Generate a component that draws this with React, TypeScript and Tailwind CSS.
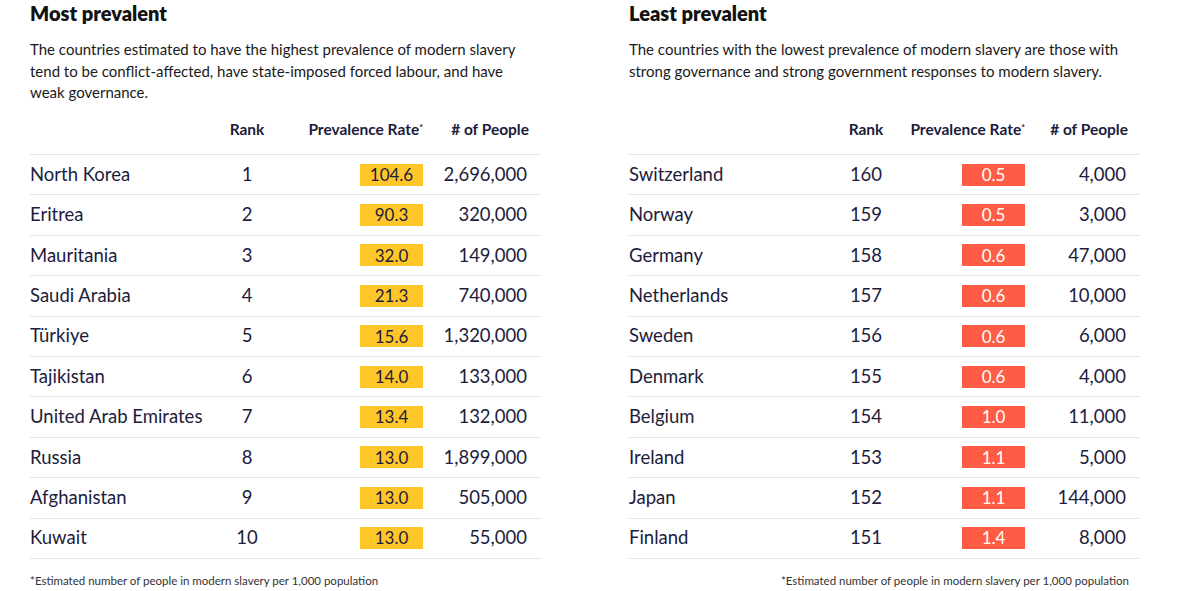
import React from "react";

type Row = { country: string; rank: number; rate: string; people: string };

const most: Row[] = [
  { country: "North Korea", rank: 1, rate: "104.6", people: "2,696,000" },
  { country: "Eritrea", rank: 2, rate: "90.3", people: "320,000" },
  { country: "Mauritania", rank: 3, rate: "32.0", people: "149,000" },
  { country: "Saudi Arabia", rank: 4, rate: "21.3", people: "740,000" },
  { country: "Türkiye", rank: 5, rate: "15.6", people: "1,320,000" },
  { country: "Tajikistan", rank: 6, rate: "14.0", people: "133,000" },
  { country: "United Arab Emirates", rank: 7, rate: "13.4", people: "132,000" },
  { country: "Russia", rank: 8, rate: "13.0", people: "1,899,000" },
  { country: "Afghanistan", rank: 9, rate: "13.0", people: "505,000" },
  { country: "Kuwait", rank: 10, rate: "13.0", people: "55,000" },
];

const least: Row[] = [
  { country: "Switzerland", rank: 160, rate: "0.5", people: "4,000" },
  { country: "Norway", rank: 159, rate: "0.5", people: "3,000" },
  { country: "Germany", rank: 158, rate: "0.6", people: "47,000" },
  { country: "Netherlands", rank: 157, rate: "0.6", people: "10,000" },
  { country: "Sweden", rank: 156, rate: "0.6", people: "6,000" },
  { country: "Denmark", rank: 155, rate: "0.6", people: "4,000" },
  { country: "Belgium", rank: 154, rate: "1.0", people: "11,000" },
  { country: "Ireland", rank: 153, rate: "1.1", people: "5,000" },
  { country: "Japan", rank: 152, rate: "1.1", people: "144,000" },
  { country: "Finland", rank: 151, rate: "1.4", people: "8,000" },
];

const footnote = "*Estimated number of people in modern slavery per 1,000 population";

function Panel({
  title,
  desc,
  rows,
  variant,
}: {
  title: string;
  desc: string;
  rows: Row[];
  variant: "most" | "least";
}) {
  const cols =
    variant === "most"
      ? "grid-cols-[187px_60px_146px_104px_1fr]"
      : "grid-cols-[207px_60px_129px_101px_1fr]";
  const box =
    variant === "most" ? "bg-[#ffc629] text-[#1c1c3c]" : "bg-[#ff5c45] text-white";

  return (
    <div className="w-[511px]">
      <h2 className="text-[20px] font-extrabold leading-[26px] text-[#111]">{title}</h2>
      <p className="mt-[13px] h-[66px] text-[15px] leading-[21.5px] text-[#1a1a1a]">{desc}</p>
      <div
        className={`grid ${cols} pt-[14px] pb-[15px] text-[15.5px] leading-[20px] font-bold text-[#1c1c3c]`}
      >
        <div />
        <div className="text-center">Rank</div>
        <div className="text-right">
          Prevalence Rate<sup className="text-[9px]">*</sup>
        </div>
        <div className="text-right">
          <span className="mr-[-2px]"># of People</span>
        </div>
        <div />
      </div>
      <div className="border-t border-[#e4e4e4]">
        {rows.map((r) => (
          <div
            key={r.country}
            className={`grid ${cols} h-[40.4px] items-center border-b border-[#e4e4e4] text-[18.5px] text-[#1c1c3c]`}
          >
            <div className="whitespace-nowrap">{r.country}</div>
            <div className="text-center">{r.rank}</div>
            <div className="flex justify-end">
              <span className={`flex h-[22px] w-[63px] items-center justify-center text-[17px] ${box}`}>
                {r.rate}
              </span>
            </div>
            <div className="text-right">{r.people}</div>
            <div />
          </div>
        ))}
      </div>
      <p
        className={`mt-[13px] text-[11.5px] text-[#333] ${variant === "least" ? "pr-[11px] text-right" : ""}`}
      >
        {footnote}
      </p>
    </div>
  );
}

export default function App() {
  return (
    <div
      className="h-[591px] w-[1200px] overflow-hidden bg-white"
      style={{ fontFamily: "Lato, 'Noto Sans', sans-serif" }}
    >
      <div className="flex gap-[88px] pl-[30px]">
        <Panel
          title="Most prevalent"
          desc="The countries estimated to have the highest prevalence of modern slavery tend to be conflict-affected, have state-imposed forced labour, and have weak governance."
          rows={most}
          variant="most"
        />
        <Panel
          title="Least prevalent"
          desc="The countries with the lowest prevalence of modern slavery are those with strong governance and strong government responses to modern slavery."
          rows={least}
          variant="least"
        />
      </div>
    </div>
  );
}
